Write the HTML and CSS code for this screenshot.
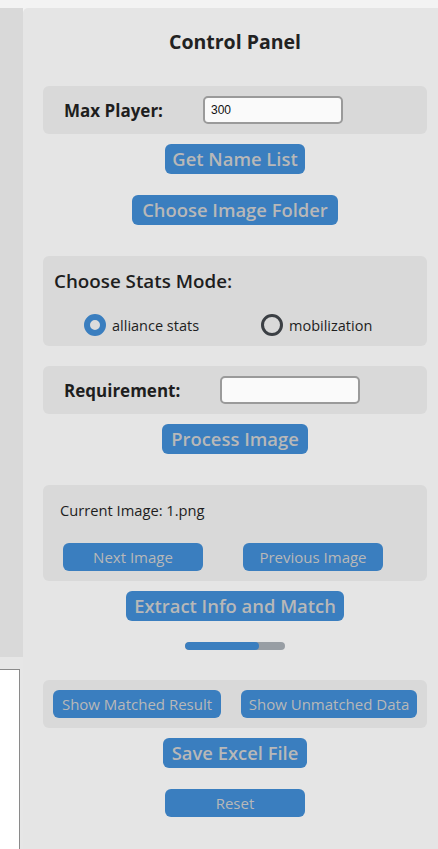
FILE: index.html
```html
<!DOCTYPE html>
<html>
<head>
<meta charset="utf-8">
<link rel="stylesheet" href="styles.css">
</head>
<body>
<div class="app">
  <div class="side">
    <div class="side-top"></div>
    <div class="side-box"></div>
  </div>
  <div class="panel">
    <div class="title">Control Panel</div>

    <div class="group row g1">
      <span class="label">Max Player:</span>
      <input class="field f1" type="text" value="300">
    </div>
    <button class="btn big b-name">Get Name List</button>
    <button class="btn big b-folder">Choose Image Folder</button>

    <div class="group g2">
      <div class="label2">Choose Stats Mode:</div>
      <div class="radios">
        <label class="radio r1"><span class="dot on"></span>alliance stats</label>
        <label class="radio r2"><span class="dot"></span>mobilization</label>
      </div>
    </div>

    <div class="group row g3">
      <span class="label">Requirement:</span>
      <input class="field f2" type="text" value="">
    </div>
    <button class="btn big b-process">Process Image</button>

    <div class="group g4">
      <div class="current">Current Image: 1.png</div>
      <div class="pair">
        <button class="btn small s-next">Next Image</button>
        <button class="btn small s-prev">Previous Image</button>
      </div>
    </div>
    <button class="btn big b-extract">Extract Info and Match</button>
    <div class="progress"><div class="fill" style="width:74%"></div></div>

    <div class="group g5">
      <button class="btn small s-matched">Show Matched Result</button>
      <button class="btn small s-unmatched">Show Unmatched Data</button>
    </div>
    <button class="btn big b-save">Save Excel File</button>
    <button class="btn reset">Reset</button>
  </div>
</div>
</body>
</html>
```

FILE: styles.css
```css
html, body {
  margin: 0;
  padding: 0;
  height: 100%;
  overflow: hidden;
}
body {
  background: #f3f3f3;
  font-family: "Open Sans", "Noto Sans", sans-serif;
  color: #1e1e1e;
}
.app {
  display: flex;
  padding-top: 8px;
  height: 841px;
}
.side {
  width: 23px;
  display: flex;
  flex-direction: column;
  background: #e6e6e6;
}
.side-top {
  height: 649px;
  background: #d9d9d9;
}
.side-box {
  margin-top: 12px;
  flex: 1;
  width: 19px;
  background: #ffffff;
  border-top: 1px solid #8a8a8a;
  border-right: 1px solid #8a8a8a;
}
.panel {
  flex: 1;
  background: #e5e5e5;
  border-top-left-radius: 5px;
  padding: 0 11px 0 20px;
  display: flex;
  flex-direction: column;
  align-items: center;
}
.title {
  margin-top: 21px;
  height: 26px;
  line-height: 26px;
  font-size: 19.5px;
  font-weight: 700;
  color: #222;
}
.group {
  align-self: stretch;
  background: #d9d9d9;
  border-radius: 6px;
  box-sizing: border-box;
}
.row {
  display: flex;
  align-items: center;
  height: 48px;
}
.g1 { margin-top: 31px; padding-left: 21px; }
.g3 { margin-top: 20px; padding-left: 21px; }
.label {
  font-size: 17px;
  font-weight: 700;
  color: #1e1e1e;
}
.g1 .label { width: 139px; }
.g3 .label { width: 156px; }
.field {
  width: 140px;
  height: 28px;
  box-sizing: border-box;
  border: 2px solid #9a9a9a;
  border-radius: 5px;
  background: #fafafa;
  font-family: "Liberation Sans", Arial, sans-serif;
  font-size: 12px;
  padding: 0 6px;
  color: #111;
  outline: none;
}
.btn {
  display: block;
  border: none;
  background: #3a7ebf;
  color: #b8b8b8;
  font-family: "Open Sans", "Noto Sans", sans-serif;
  border-radius: 6px;
  padding: 0;
  cursor: pointer;
  white-space: nowrap;
}
.big {
  height: 30px;
  font-size: 18.4px;
  font-weight: 600;
  line-height: 30px;
}
.b-name { margin-top: 10px; width: 140px; }
.b-folder { margin-top: 21px; width: 206px; }
.b-process { margin-top: 10px; width: 146px; }
.b-extract { margin-top: 10px; width: 218px; }
.b-save { margin-top: 10px; width: 144px; }
.reset {
  margin-top: 21px;
  width: 140px;
  height: 28px;
  font-size: 15px;
}
.g2 {
  margin-top: 31px;
  height: 90px;
  padding: 12px 0 0 11px;
}
.label2 {
  font-size: 18.8px;
  font-weight: 600;
  line-height: 26px;
  color: #1e1e1e;
}
.radios {
  display: flex;
  margin-top: 20px;
  padding-left: 30px;
}
.radio {
  display: flex;
  align-items: center;
  font-size: 14.5px;
  color: #1e1e1e;
  height: 22px;
}
.r1 { width: 177px; }
.dot {
  width: 22px;
  height: 22px;
  box-sizing: border-box;
  border-radius: 50%;
  border: 3px solid #3b3f44;
  margin-right: 6px;
}
.dot.on {
  border: 6px solid #3a7ebf;
  background: #dcdcdc;
}
.g4 {
  margin-top: 31px;
  height: 96px;
  padding: 14px 0 0 17px;
}
.current {
  font-size: 14.7px;
  line-height: 22px;
  color: #1e1e1e;
}
.pair {
  display: flex;
  gap: 40px;
  margin-top: 22px;
  padding-left: 3px;
}
.small {
  height: 28px;
  font-size: 15px;
  line-height: 28px;
}
.s-next, .s-prev { width: 140px; }
.progress {
  margin-top: 21px;
  width: 100px;
  height: 8px;
  border-radius: 4px;
  background: #989ea4;
  overflow: hidden;
}
.fill {
  height: 100%;
  background: #3a7ebf;
  border-radius: 4px;
}
.g5 {
  margin-top: 30px;
  height: 48px;
  display: flex;
  align-items: center;
  gap: 20px;
  padding-left: 10px;
}
.s-matched { width: 168px; }
.s-unmatched { width: 176px; }
```
